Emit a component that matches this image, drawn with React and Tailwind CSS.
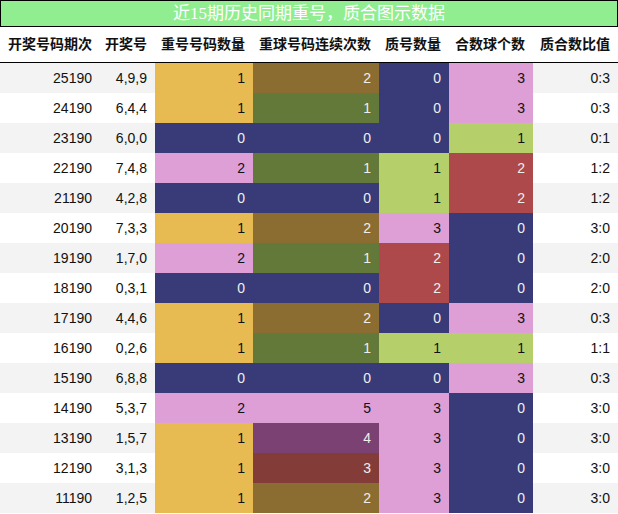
const COLS = ['开奖号码期次', '开奖号', '重号号码数量', '重球号码连续次数', '质号数量', '合数球个数', '质合数比值'];

const ROWS = [
  ['25190', '4,9,9', 1, 2, 0, 3, '0:3'],
  ['24190', '6,4,4', 1, 1, 0, 3, '0:3'],
  ['23190', '6,0,0', 0, 0, 0, 1, '0:1'],
  ['22190', '7,4,8', 2, 1, 1, 2, '1:2'],
  ['21190', '4,2,8', 0, 0, 1, 2, '1:2'],
  ['20190', '7,3,3', 1, 2, 3, 0, '3:0'],
  ['19190', '1,7,0', 2, 1, 2, 0, '2:0'],
  ['18190', '0,3,1', 0, 0, 2, 0, '2:0'],
  ['17190', '4,4,6', 1, 2, 0, 3, '0:3'],
  ['16190', '0,2,6', 1, 1, 1, 1, '1:1'],
  ['15190', '6,8,8', 0, 0, 0, 3, '0:3'],
  ['14190', '5,3,7', 2, 5, 3, 0, '3:0'],
  ['13190', '1,5,7', 1, 4, 3, 0, '3:0'],
  ['12190', '3,1,3', 1, 3, 3, 0, '3:0'],
  ['11190', '1,2,5', 1, 2, 3, 0, '3:0'],
];

// per-column value -> cell style
const DARK = 'text-[#eeeeee]';
const LIGHT = 'text-[#111111]';
const PALETTE = [
  {
    0: `bg-[#393b79] ${DARK}`,
    1: `bg-[#e7ba52] ${LIGHT}`,
    2: `bg-[#de9ed6] ${LIGHT}`,
  },
  {
    0: `bg-[#393b79] ${DARK}`,
    1: `bg-[#637939] ${DARK}`,
    2: `bg-[#8c6d31] ${DARK}`,
    3: `bg-[#843c39] ${DARK}`,
    4: `bg-[#7b4173] ${DARK}`,
    5: `bg-[#de9ed6] ${LIGHT}`,
  },
  {
    0: `bg-[#393b79] ${DARK}`,
    1: `bg-[#b5cf6b] ${LIGHT}`,
    2: `bg-[#ad494a] ${DARK}`,
    3: `bg-[#de9ed6] ${LIGHT}`,
  },
  {
    0: `bg-[#393b79] ${DARK}`,
    1: `bg-[#b5cf6b] ${LIGHT}`,
    2: `bg-[#ad494a] ${DARK}`,
    3: `bg-[#de9ed6] ${LIGHT}`,
  },
];

const GRID = 'grid grid-cols-[100px_55px_98px_126px_70px_84px_85px]';

export default function App() {
  return (
    <div className="w-[618px] bg-white font-['Liberation_Sans','Noto_Sans_CJK_SC',sans-serif] text-[14px] text-[#111111]">
      <div className="h-[27px] border border-black bg-[#90ee90] text-center font-['Liberation_Serif','Noto_Sans_CJK_SC',serif] text-[17px] leading-[25px] text-white">
        近15期历史同期重号，质合图示数据
      </div>
      <div className={`${GRID} h-[36px] border-b border-black font-bold`}>
        {COLS.map((c) => (
          <div key={c} className="flex items-center justify-end pr-2">
            {c}
          </div>
        ))}
      </div>
      {ROWS.map((row, i) => (
        <div key={row[0]} className={`${GRID} h-[30px] ${i % 2 === 0 ? 'bg-[#f3f3f3]' : 'bg-white'}`}>
          {row.map((v, j) => {
            const cls = j >= 2 && j <= 5 ? PALETTE[j - 2][v] : '';
            return (
              <div key={j} className={`flex items-center justify-end pr-2 ${cls}`}>
                {v}
              </div>
            );
          })}
        </div>
      ))}
    </div>
  );
}
